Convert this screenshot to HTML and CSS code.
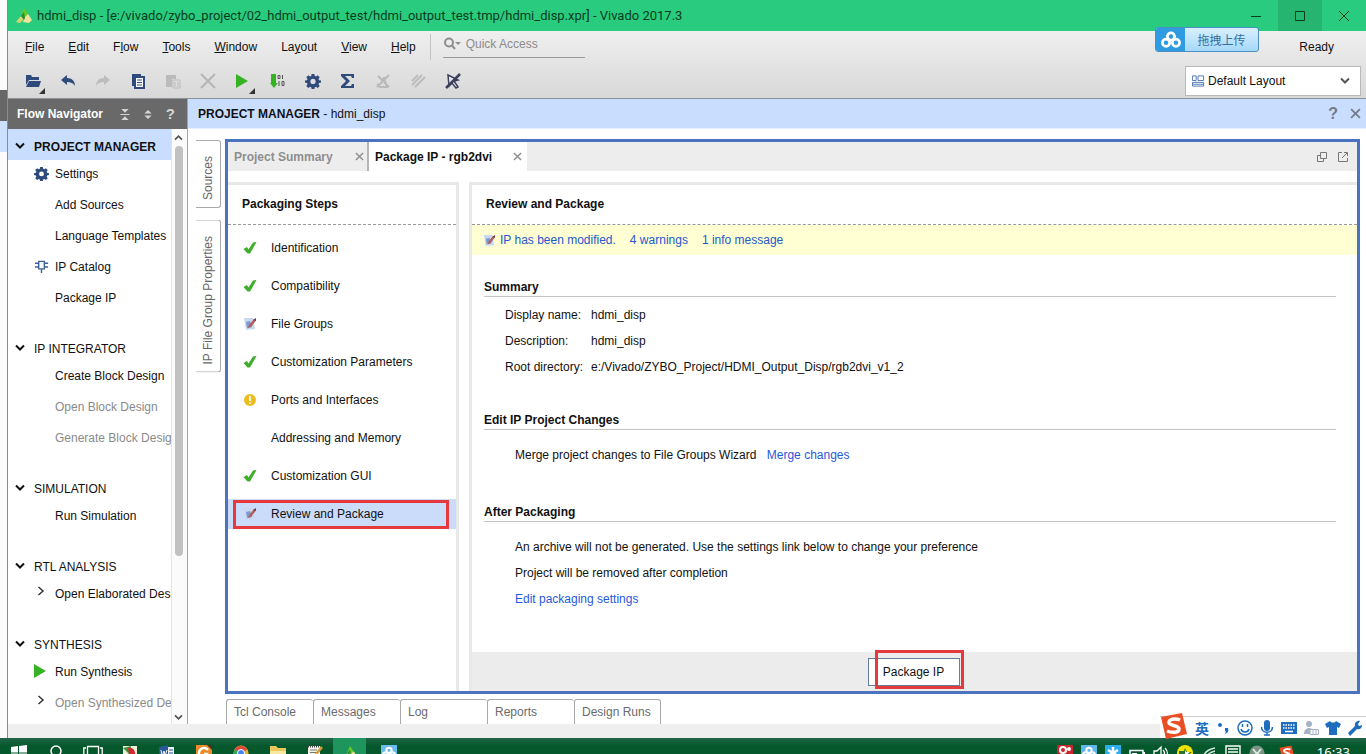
FILE: index.html
```
<!DOCTYPE html>
<html lang="en">
<head>
<meta charset="utf-8">
<title>hdmi_disp - Vivado 2017.3</title>
<link rel="stylesheet" href="styles.css">
</head>
<body>
<svg class="defs" aria-hidden="true">
  <symbol id="check" viewBox="0 0 14 14"><path d="M.5 8l3.500-2 1.500 2.500L10 1.500l3.500-.5L7 12.500H4.500z" fill="#3fae2a"/></symbol>
  <symbol id="edited" viewBox="0 0 14 14"><path d="M1 1h9l2 11-9 1z" fill="#c9d8f1"/><path d="M3 5l4-1 2 6-5 1z" fill="#7d9bd2"/><path d="M5 11l1-3 5-6 2 1.500L8 10z" fill="#b0605f"/><path d="M10 3l3-2v3z" fill="#6e3c50"/></symbol>
  <symbol id="cog" viewBox="0 0 16 16"><path fill-rule="evenodd" fill="#2f4b7c" d="M6.600 1h2.800l.4 2 1.200.5 1.700-1.200 2 2L13.500 6l.5 1.200 2 .4v2l-2 .5-.5 1.200 1.200 1.700-2 2-1.700-1.200-1.200.5-.4 1.700H6.600l-.4-1.700-1.200-.5-1.700 1.200-2-2L2.500 11.300 2 10.100l-2-.5v-2l2-.4L2.500 6 1.300 4.300l2-2L5 3.500 6.200 3zM8 5.800a2.600 2.600 0 100 5.200 2.600 2.600 0 000-5.200z"/></symbol>
  <symbol id="down" viewBox="0 0 10 8"><path d="M1 1.500l4 4 4-4" fill="none" stroke="currentColor" stroke-width="2"/></symbol>
  <symbol id="right" viewBox="0 0 8 10"><path d="M1.500 1l4.500 4-4.500 4" fill="none" stroke="currentColor" stroke-width="1.500"/></symbol>
  <symbol id="cross" viewBox="0 0 10 10"><path d="M1 1l8 8M9 1L1 9" fill="none" stroke="currentColor" stroke-width="1.600"/></symbol>
  <symbol id="play" viewBox="0 0 12 14"><path d="M0 0l12 7-12 7z" fill="#35b324"/></symbol>
  <symbol id="vivado" viewBox="0 0 18 18"><path d="M6 8L9 1l4 6-3 4z" fill="#62cc2b"/><path d="M1 15l5-6 3 3-4 4z" fill="#d8d56f"/><path d="M8 15l2-5 3-3 4 6-3 3z" fill="#efe49a"/><path d="M6 9l3-4 1 6-1 2z" fill="#318b35"/></symbol>
  <symbol id="cloud" viewBox="0 0 24 20"><g fill="none" stroke="currentColor" stroke-width="3"><circle cx="12" cy="6" r="4"/><circle cx="6.500" cy="13" r="4"/><circle cx="17.500" cy="13" r="4"/></g></symbol>
  <symbol id="sogou" viewBox="0 0 28 28"><path d="M1 5l21-4 5 21-21 5z" fill="#e94f25"/><path d="M20 8c-4-2-12-1-11 3 1 3 10 2 10 6 0 4-7 4-12 2" fill="none" stroke="#fff" stroke-width="3.500"/></symbol>
</svg>
<div class="desktop">
  <div class="stage">
    <div class="behind"><i class="behind-dark"></i><i class="behind-blue"></i></div>
    <div class="window">
      <header class="titlebar">
        <svg class="logo"><use href="#vivado"/></svg>
        <h1>hdmi_disp - [e:/vivado/zybo_project/02_hdmi_output_test/hdmi_output_test.tmp/hdmi_disp.xpr] - Vivado 2017.3</h1>
        <button class="caption" aria-label="Minimize"><svg viewBox="0 0 12 12"><path d="M1 6.500h10" stroke="#073d20"/></svg></button>
        <button class="caption lit" aria-label="Restore"><svg viewBox="0 0 12 12"><path d="M1.500 1.500h9v9h-9z" fill="none" stroke="#073d20"/></svg></button>
        <button class="caption" aria-label="Close"><svg viewBox="0 0 12 12"><path d="M1 1l10 10M11 1L1 11" stroke="#073d20"/></svg></button>
      </header>
      <div class="chrome">
        <div class="menurow">
          <nav class="menu">
            <button><u>F</u>ile</button><button><u>E</u>dit</button><button>F<u>l</u>ow</button><button><u>T</u>ools</button><button><u>W</u>indow</button><button>La<u>y</u>out</button><button><u>V</u>iew</button><button><u>H</u>elp</button>
          </nav>
          <label class="quick"><svg viewBox="0 0 18 14"><circle cx="6" cy="5.500" r="4" fill="none" stroke="#8e8e8e" stroke-width="2"/><path d="M9 8.500l3 3.500" stroke="#8e8e8e" stroke-width="2"/><path d="M12 5h6l-3 3z" fill="#8e8e8e"/></svg><input type="text" placeholder="Quick Access" aria-label="Quick Access"></label>
          <span class="ready">Ready</span>
        </div>
        <div class="toolrow">
          <div class="tools">
            <button class="has-more" aria-label="Open"><svg viewBox="0 0 16 16"><path d="M1 2h5l1 2h7v3H4l-3 5z" fill="#2f4b7c"/><path d="M4 8h12l-2 6H1z" fill="#2f4b7c"/></svg></button>
            <button aria-label="Undo"><svg viewBox="0 0 16 16"><path d="M1 7l6-5v3c5 0 8 3 8 8-2-3-4-4-8-4v3z" fill="#2f4b7c"/></svg></button>
            <button aria-label="Redo"><svg viewBox="0 0 16 16"><path d="M15 7L9 2v3c-5 0-8 3-8 8 2-3 4-4 8-4v3z" fill="#bdbdbd"/></svg></button>
            <button aria-label="Copy"><svg viewBox="0 0 16 16"><path d="M2 1h9v2H4v10H2z" fill="#2f4b7c"/><path d="M5 4h9v11H5z" fill="#fff" stroke="#2f4b7c" stroke-width="2"/><path d="M7 7h5M7 9.500h5M7 12h5" stroke="#2f4b7c"/></svg></button>
            <button aria-label="Paste"><svg viewBox="0 0 16 16"><path d="M1 2h10v4H7v8H1z" fill="#bbb"/><path d="M8 7h7v8H8z" fill="#ddd" stroke="#bbb"/><path d="M10 9v5M13 9v5" stroke="#bbb"/></svg></button>
            <button aria-label="Delete"><svg viewBox="0 0 16 16"><path d="M1 1l14 14M15 1L1 15" stroke="#b5b5b5" stroke-width="2"/></svg></button>
            <button class="has-more" aria-label="Run"><svg viewBox="0 0 16 16"><path d="M1 1l12 7-12 7z" fill="#35b324"/></svg></button>
            <button aria-label="Generate bitstream"><svg viewBox="0 0 16 16"><path d="M1 1h5v9h2l-4 5-4-5h1z" fill="#35b324"/><path d="M8 2.500h2v3H8zM12.500 2v4M9 8v5M12 8.500h2v4h-2z" fill="none" stroke="#555"/></svg></button>
            <button aria-label="Settings"><svg><use href="#cog"/></svg></button>
            <button aria-label="Report"><svg viewBox="0 0 16 16"><path d="M1 1h13v4h-2l-1-2H5l5 5-5 5h6l1-2h2v4H1v-2l5-5-5-5z" fill="#2f4b7c"/></svg></button>
            <button aria-label="Cut route"><svg viewBox="0 0 16 16"><path d="M2 14L14 2M3 3l4 4 2-2 3 9H5l-3-3M9 9l5 5" fill="none" stroke="#b9b9b9" stroke-width="2"/></svg></button>
            <button aria-label="Highlight"><svg viewBox="0 0 16 16"><path d="M2 12L12 2M5 14L15 4M2 8l6-6" stroke="#bcbcbc" stroke-width="2"/></svg></button>
            <button aria-label="Unselect"><svg viewBox="0 0 16 16"><path d="M3 2l10 5-4 1 4 6-2 1-4-5-3 3z" fill="#eee" stroke="#3d405c" stroke-width="1.500"/><path d="M1 15L15 1" stroke="#3d405c" stroke-width="2.500"/></svg></button>
          </div>
          <div class="picker">
            <svg viewBox="0 0 14 12"><path d="M.5.5h4v5h-4zM6.500.5h6v5h-6zM.5 7.500h12v4H.5zM1 9.500h12" fill="none" stroke="#4d75b0"/></svg>
            <select aria-label="Layout"><option>Default Layout</option></select>
            <svg class="arrow"><use href="#down"/></svg>
          </div>
        </div>
      </div>
      <div class="work">
        <aside class="navigator">
          <div class="nav-title"><h2>Flow Navigator</h2>
            <svg viewBox="0 0 10 12"><path d="M1 0h8L5 4zM0 5.500h10v1H0zM1 12h8L5 8z" fill="#d4d4d4"/></svg>
            <svg viewBox="0 0 10 12"><path d="M1 5h8L5 1zM1 7h8l-4 4z" fill="#d4d4d4"/></svg>
            <b>?</b></div>
          <div class="nav-body">
            <div class="tree">
              <section><h3 class="current"><svg><use href="#down"/></svg>PROJECT MANAGER</h3>
                <a href="#settings"><svg class="big"><use href="#cog"/></svg>Settings</a>
                <a href="#add">Add Sources</a><a href="#lang">Language Templates</a>
                <a href="#catalog"><svg class="big" viewBox="0 0 16 16"><path d="M5 2.500h6v8H5zM1 4.500h4M1 8.500h4M11 4.500h4M11 8.500h4M8 10v5" fill="none" stroke="#3f6396" stroke-width="1.500"/></svg>IP Catalog</a>
                <a href="#package">Package IP</a></section>
              <section><h3><svg><use href="#down"/></svg>IP INTEGRATOR</h3>
                <a href="#create">Create Block Design</a><a class="off" href="#open">Open Block Design</a><a class="off" href="#generate">Generate Block Design</a></section>
              <section><h3><svg><use href="#down"/></svg>SIMULATION</h3><a href="#sim">Run Simulation</a></section>
              <section><h3><svg><use href="#down"/></svg>RTL ANALYSIS</h3><a href="#elab"><svg class="small"><use href="#right"/></svg>Open Elaborated Design</a></section>
              <section><h3><svg><use href="#down"/></svg>SYNTHESIS</h3><a href="#syn"><svg class="run"><use href="#play"/></svg>Run Synthesis</a><a class="off" href="#opensyn"><svg class="small"><use href="#right"/></svg>Open Synthesized Design</a></section>
            </div>
            <div class="scroll"><svg class="up"><use href="#down"/></svg><i></i><svg class="dn"><use href="#down"/></svg></div>
          </div>
        </aside>
        <main>
          <div class="main-title"><h2><b>PROJECT MANAGER</b> - hdmi_disp</h2><span>?</span><svg><use href="#cross"/></svg></div>
          <div class="main-body">
            <div class="sidetabs"><button>Sources</button><button>IP File Group Properties</button></div>
            <div class="center">
              <div class="editor">
                <div class="tabs">
                  <div class="tab"><span>Project Summary</span><svg><use href="#cross"/></svg></div>
                  <div class="tab active"><span>Package IP - rgb2dvi</span><svg><use href="#cross"/></svg></div>
                  <div class="tab-tools">
                    <svg viewBox="0 0 12 12"><path d="M4.500 1.500h6v6h-6zM4 4.500H1.500v6h6V8" fill="none" stroke="#777"/></svg>
                    <svg viewBox="0 0 12 12"><path d="M5 1.500H1.500v9h9V7M5 7l5-5M7 1.500h3.500V5" fill="none" stroke="#777"/></svg>
                  </div>
                </div>
                <div class="panes">
                  <section class="steps"><h2>Packaging Steps</h2>
                    <ul>
                      <li><svg><use href="#check"/></svg>Identification</li>
                      <li><svg><use href="#check"/></svg>Compatibility</li>
                      <li><svg><use href="#edited"/></svg>File Groups</li>
                      <li><svg><use href="#check"/></svg>Customization Parameters</li>
                      <li><svg viewBox="0 0 14 14"><circle cx="7" cy="7" r="6" fill="#efbd1b"/><path d="M7 3v5M7 9.500v1.500" stroke="#fff" stroke-width="1.800"/></svg>Ports and Interfaces</li>
                      <li><svg></svg>Addressing and Memory</li>
                      <li><svg><use href="#check"/></svg>Customization GUI</li>
                      <li class="selected"><svg><use href="#edited"/></svg>Review and Package<i class="mark"></i></li>
                    </ul>
                  </section>
                  <section class="review"><h2>Review and Package</h2>
                    <div class="banner"><svg><use href="#edited"/></svg><a href="#modified">IP has been modified.</a><a href="#warnings">4 warnings</a><a href="#info">1 info message</a></div>
                    <div class="details">
                      <h3>Summary</h3>
                      <dl><dt>Display name:</dt><dd>hdmi_disp</dd><dt>Description:</dt><dd>hdmi_disp</dd><dt>Root directory:</dt><dd>e:/Vivado/ZYBO_Project/HDMI_Output_Disp/rgb2dvi_v1_2</dd></dl>
                      <h3>Edit IP Project Changes</h3>
                      <p class="merge">Merge project changes to File Groups Wizard <a href="#merge">Merge changes</a></p>
                      <h3>After Packaging</h3>
                      <div class="after"><p>An archive will not be generated. Use the settings link below to change your preference</p><p>Project will be removed after completion</p><p><a href="#edit">Edit packaging settings</a></p></div>
                    </div>
                    <footer><div class="action"><button>Package IP</button><i class="mark"></i></div></footer>
                  </section>
                </div>
              </div>
              <div class="consoles"><button>Tcl Console</button><button>Messages</button><button>Log</button><button>Reports</button><button>Design Runs</button></div>
            </div>
          </div>
        </main>
      </div>
      <div class="status"></div>
    </div>
  </div>
  <div class="taskbar">
    <div class="apps">
      <span><svg viewBox="0 0 16 16"><path d="M0 2l7-1v6.500H0zM8 1l8-1v7.500H8zM0 8.500h7V15l-7-1zM8 8.500h8V16l-8-1z" fill="#fff"/></svg></span>
      <span><svg viewBox="0 0 16 16"><circle cx="8" cy="6" r="5" fill="none" stroke="#fff" stroke-width="1.500"/></svg></span>
      <span class="wide"><svg viewBox="0 0 20 16"><path d="M4.500 1.500h11v13h-11zM3 3H.8v10H3M17 3h2.200v10H17" fill="none" stroke="#fff" stroke-width="1.300"/></svg></span>
      <span><svg viewBox="0 0 16 16"><path d="M1 1h14v14H1z" fill="#f3f0dd"/><path d="M1 3l8-2-1 9z" fill="#35963b"/><path d="M6 3c5-1 8 3 7 8l-6-2z" fill="#d5272e"/></svg></span>
      <span><svg viewBox="0 0 16 16"><path d="M0 2l9-2v16l-9-2z" fill="#2b579a"/><path d="M9 2h6v12H9z" fill="#eef3fb"/><path d="M2 5l1 6 2-5 1 5 2-6" fill="none" stroke="#fff"/><path d="M10 5h4M10 8h4M10 11h4" stroke="#2b579a"/></svg></span>
      <span><svg viewBox="0 0 16 16"><path d="M0 0h16v16H0z" fill="#ee8a28"/><path d="M12 5a5 5 0 10-1 7V9H8" fill="none" stroke="#fff" stroke-width="2.500"/><path d="M11 0h5v5z" fill="#4b3218"/></svg></span>
      <span><svg viewBox="0 0 16 16"><circle cx="8" cy="8" r="7.500" fill="#e2b52d"/><path d="M1.500 4.500A7.500 7.500 0 0114.500 4.500L8 8z" fill="#dd4b3e"/><path d="M1.500 4.500A7.500 7.500 0 008 15.500L8 8z" fill="#3aa757"/><circle cx="8" cy="8" r="3.500" fill="#4484ef" stroke="#fff"/></svg></span>
      <span><svg viewBox="0 0 16 16"><path d="M0 1h6l2 2h8v12H0z" fill="#edc65b"/><path d="M0 6h16v9H0z" fill="#f9e8a2"/></svg></span>
      <span><svg viewBox="0 0 16 16"><path d="M1 1h12v15H1z" fill="#f4f4e6"/><path d="M1 1.500h12" stroke="#444" stroke-width="2" stroke-dasharray="1 1"/><path d="M3 5h7M3 7.500h6" stroke="#777"/><path d="M7 10l7-9 2 2-7 8z" fill="#d49b36"/></svg></span>
      <span class="running"><svg><use href="#vivado"/></svg></span>
      <span><svg viewBox="0 0 24 24"><path d="M0 0h24v24H0z" fill="#69bcec"/><g fill="none" stroke="#fff" stroke-width="3"><circle cx="12" cy="8" r="4"/><circle cx="7" cy="15" r="4"/><circle cx="17" cy="15" r="4"/></g></svg></span>
    </div>
    <div class="tray">
      <svg viewBox="0 0 16 16"><path d="M0 0h16v16H0z" fill="#ca2630"/><circle cx="6" cy="5" r="3" fill="none" stroke="#fff" stroke-width="2"/><circle cx="12" cy="4" r="2" fill="#fff"/><path d="M2 14c1-5 9-5 10 0" stroke="#fff" fill="none" stroke-width="2"/></svg>
      <svg viewBox="0 0 24 24"><path d="M0 0h24v24H0z" fill="#62b7ea"/><g fill="none" stroke="#fff" stroke-width="3"><circle cx="12" cy="8" r="4"/><circle cx="7" cy="15" r="4"/><circle cx="17" cy="15" r="4"/></g></svg>
      <svg viewBox="0 0 16 16"><path d="M0 0h16v16H0z" fill="#2eaeea"/><path d="M8 2v12M3 5l10 6M13 5L3 11" stroke="#fff" stroke-width="2.500"/></svg>
      <svg viewBox="0 0 16 16"><path d="M1 5.500h13v7H1z" fill="none" stroke="#fff" stroke-width="1.500"/><path d="M3 8h5v3H3zM14 7h2v4h-2z" fill="#fff"/></svg>
      <svg viewBox="0 0 16 16"><path d="M1 6h3l4-4v12l-4-4H1zM10 5c2 2 2 4 0 6M12 3c3 3 3 7 0 10" fill="none" stroke="#fff" stroke-width="1.300"/></svg>
      <svg viewBox="0 0 16 16"><circle cx="8" cy="8" r="8" fill="#f1e400"/><path d="M8 3l2 4h5l-4 3 1 5H5V9H2V6h5z" fill="#2c7132"/><path d="M8 5l1 2h4l-5 4z" fill="#fff"/></svg>
      <svg viewBox="0 0 16 16"><path d="M2 12C4 6 8 4 14 3M5 14c1-5 4-7 9-8M9 14c1-3 2-5 5-5" fill="none" stroke="#d7e7de" stroke-width="1.500"/></svg>
      <svg viewBox="0 0 16 16"><path d="M1 1h14v11H9l-3 3v-3H1zM3 4h10M3 7h10" fill="none" stroke="#fff" stroke-width="1.400"/></svg>
      <svg viewBox="0 0 16 16"><circle cx="8" cy="8" r="7.500" fill="#789382"/><path d="M4 4l4 5 4-5M8 9v5" fill="none" stroke="#d8e6dc" stroke-width="2"/></svg>
      <svg class="apart" viewBox="0 0 28 28"><use href="#sogou"/></svg>
      <time>16:33</time>
    </div>
  </div>
  <button class="upload"><span class="upload-icon"><svg><use href="#cloud"/></svg></span><span class="upload-text">拖拽上传</span></button>
  <div class="ime">
    <svg class="s"><use href="#sogou"/></svg>
    <b>英</b>
    <svg viewBox="0 0 16 16"><circle cx="5" cy="5" r="2" fill="#1e6dbe"/><path d="M10 8h3c1 3 0 5-3 6 1-2 1-3 0-3z" fill="#1e6dbe"/></svg>
    <svg viewBox="0 0 16 16"><circle cx="8" cy="8" r="7" fill="none" stroke="#1e6dbe" stroke-width="1.500"/><path d="M4 9c1 4 7 4 8 0M5.500 4v3M10.500 4v3" fill="none" stroke="#1e6dbe" stroke-width="1.500"/></svg>
    <svg viewBox="0 0 16 16"><path d="M5 3a3 3 0 016 0v5a3 3 0 01-6 0z" fill="#1e6dbe"/><path d="M2.500 7c0 7 11 7 11 0M8 12v3M5 15h6" fill="none" stroke="#1e6dbe" stroke-width="1.500"/></svg>
    <svg viewBox="0 0 16 16"><path d="M0 2h16v12H0z" fill="#1e6dbe"/><path d="M2 5h12M2 8h12" stroke="#fff" stroke-width="1.500" stroke-dasharray="1.500 1"/><path d="M4 11.500h8" stroke="#fff" stroke-width="1.500"/></svg>
    <svg viewBox="0 0 16 16"><circle cx="6" cy="4" r="3" fill="#a6b3c5"/><path d="M1 14c0-8 10-8 10 0z" fill="#a6b3c5"/><path d="M7 9.500h8.500v5H7zM10 9v5M13 9v5" fill="#fff" stroke="#a6b3c5"/></svg>
    <svg viewBox="0 0 16 16"><path d="M5 1c1 2 5 2 6 0l5 3-2 4-2-1v8H4V7L2 8 0 4z" fill="#1e6dbe"/></svg>
    <svg viewBox="0 0 16 16"><path d="M1 13l7-7c-1-3 2-6 5-5l-2 3 1 2 3-1c0 4-3 5-5 4l-7 7z" fill="#1e6dbe"/></svg>
  </div>
</div>
</body>
</html>
```
FILE: styles.css
```
* { box-sizing: border-box; }
body { margin: 0; font: 12px/16px "Liberation Sans", Arial, sans-serif; color: #111; }
h1, h2, h3, p, ul, dl, dd { margin: 0; padding: 0; font-size: 12px; }
button, input, select { font: inherit; color: inherit; background: none; border: 0; padding: 0; margin: 0; }
a { color: inherit; text-decoration: none; }
svg { display: block; flex: none; }
.defs { position: absolute; width: 0; height: 0; }

.desktop { position: relative; height: 100vh; display: flex; flex-direction: column; overflow: hidden; background: #fff; }
.stage { flex: 1; min-height: 0; display: flex; }
.behind { width: 7px; flex: none; display: flex; flex-direction: column; padding-top: 90px; background: #fbfbfb; }
.behind-dark { height: 31px; background: #666; }
.behind-blue { height: 31px; background: #cbdfff; }
.window { flex: 1; min-width: 0; display: flex; flex-direction: column; border-left: 1px solid #6f9a8a; }

.titlebar { height: 31px; flex: none; display: flex; align-items: center; background: #29cc7e; padding-left: 7px; }
.logo { width: 18px; height: 18px; margin-right: 4px; }
.titlebar h1 { flex: 1; font: 13px/20px Roboto, sans-serif; color: #063d20; white-space: nowrap; }
.caption { width: 44px; height: 31px; display: grid; place-items: center; }
.caption svg { width: 12px; height: 12px; }
.lit { background: #26b571; }

.chrome { height: 68px; flex: none; background: linear-gradient(#efefef, #d8d8d8); border-bottom: 1px solid #8f9299; display: flex; flex-direction: column; }
.menurow { height: 32px; display: flex; align-items: center; padding: 0 32px 0 17px; }
.menu { display: flex; gap: 24px; padding-right: 14px; margin-right: 12px; border-right: 1px solid #c3c3c3; line-height: 26px; }
.quick { width: 142px; display: flex; align-items: center; gap: 5px; border-bottom: 1px solid #999; padding-bottom: 5px; }
.quick svg { width: 18px; height: 14px; }
.quick input { width: 110px; outline: 0; }
.quick input::placeholder { color: #8b8b8b; opacity: 1; }
.ready { margin-left: auto; }
.toolrow { flex: 1; display: flex; align-items: center; justify-content: space-between; padding: 0 5px 0 16px; }
.tools { display: flex; gap: 17px; }
.tools button { width: 18px; height: 28px; display: grid; place-items: center; position: relative; }
.tools svg { width: 16px; height: 16px; }
.has-more::after { content: ""; position: absolute; right: -3px; bottom: 1px; border: 3px solid transparent; border-right-color: #333; border-bottom-color: #333; }
.picker { position: relative; width: 176px; height: 30px; display: flex; align-items: center; gap: 3px; padding-left: 6px; background: #fff; border: 1px solid #b9b9b9; }
.picker svg { width: 13px; height: 12px; }
.picker select { flex: 1; height: 28px; appearance: none; outline: 0; }
.picker .arrow { width: 10px; height: 8px; margin-right: 10px; color: #555; pointer-events: none; }

.work { flex: 1; min-height: 0; display: flex; }
.navigator { width: 180px; flex: none; display: flex; flex-direction: column; border-right: 1px solid #a4a4a4; }
.nav-title { height: 30px; flex: none; display: flex; align-items: center; gap: 13px; padding: 0 12px 0 9px; background: #696969; color: #fff; }
.nav-title h2 { flex: 1; }
.nav-title svg { width: 10px; height: 11px; }
.nav-title b { color: #d4d4d4; font-size: 15px; }
.nav-body { flex: 1; min-height: 0; display: flex; }
.tree { flex: 1; min-width: 0; overflow: hidden; white-space: nowrap; }
.tree section { margin-bottom: 17px; }
.tree h3 { position: relative; height: 31px; margin-bottom: -1px; padding: 4px 0 0 26px; line-height: 28px; font-weight: 400; }
.tree h3 svg { position: absolute; left: 7px; top: 13px; width: 10px; height: 8px; }
.tree .current { font-weight: 700; background: #c9deff; }
.tree a { position: relative; display: block; padding-left: 47px; line-height: 31px; }
.tree a svg { position: absolute; left: 26px; top: 7px; }
.big { width: 15px; height: 15px; }
.small { width: 8px; height: 10px; margin-left: 3px; color: #333; }
.run { width: 12px; height: 14px; }
.off { color: #8a8a8a; }
.scroll { width: 16px; flex: none; display: flex; flex-direction: column; align-items: center; padding: 5px 2px 3px 0; border-left: 1px solid #e4e4e4; background: #fbfbfb; color: #555; }
.scroll i { width: 8px; flex: 0 1 410px; border-radius: 4px; background: #c1c1c1; margin-top: 5px; }
.scroll svg { width: 9px; height: 7px; }
.up { transform: scaleY(-1); }
.dn { margin-top: auto; }

main { flex: 1; min-width: 0; display: flex; flex-direction: column; }
.main-title { height: 30px; flex: none; display: flex; align-items: center; gap: 12px; padding: 0 5px 0 10px; background: #c9deff; color: #737b88; border-bottom: 1px solid #e6effd; }
.main-title h2 { flex: 1; font-weight: 400; color: #111; }
.main-title span { font-weight: 700; font-size: 16px; }
.main-title svg { width: 11px; height: 11px; }
.main-body { flex: 1; min-height: 0; display: flex; padding: 10px 6px 0 8px; gap: 4px; }
.sidetabs { width: 25px; display: flex; flex-direction: column; align-items: flex-start; gap: 12px; padding-top: 1px; }
.sidetabs button { width: 25px; writing-mode: vertical-rl; transform: rotate(180deg); padding: 7px 0 15px; line-height: 24px; color: #666; border: 1px solid #aaa; border-right: 0; border-radius: 3px 0 0 3px; }
.center { flex: 1; min-width: 0; display: flex; flex-direction: column; }
.editor { flex: 1; min-height: 0; display: flex; flex-direction: column; border: 3px solid #4b73bf; }
.tabs { height: 29px; flex: none; display: flex; background: #ededed; }
.tab { width: 141px; display: flex; justify-content: space-between; align-items: center; padding: 0 3px 0 6px; font-weight: 700; color: #8e8e8e; border-right: 2px solid #b5b5b5; }
.tab svg { width: 9px; height: 9px; color: #8e8e8e; }
.active { width: 158px; padding-right: 5px; background: #fff; color: #111; border: 0; }
.tab-tools { margin-left: auto; display: flex; align-items: center; gap: 9px; padding-right: 8px; }
.tab-tools svg { width: 12px; height: 12px; }
.panes { flex: 1; min-height: 0; display: flex; gap: 10px; padding-top: 11px; }
.steps { width: 231px; flex: none; border-top: 3px solid #e8e8e8; border-right: 3px solid #e8e8e8; }
.review { flex: 1; display: flex; flex-direction: column; border-top: 3px solid #e8e8e8; border-left: 3px solid #e8e8e8; }
.panes h2 { line-height: 39px; padding-left: 14px; border-bottom: 1px dashed #999; }
.steps ul { list-style: none; padding-top: 8px; display: flex; flex-direction: column; gap: 8px; }
.steps li { position: relative; height: 30px; display: flex; align-items: center; gap: 14px; padding-left: 15px; }
.steps li svg { width: 14px; height: 14px; }
.selected { background: #cbdcfa; }
.mark { position: absolute; border: 3px solid #e5393e; pointer-events: none; }
.selected .mark { inset: 1px 7px 0 5px; }
.banner { height: 30px; flex: none; display: flex; align-items: center; gap: 14px; padding-left: 11px; background: #ffffd3; color: #2358d0; }
.banner svg { width: 13px; height: 13px; margin-right: -10px; }
.details { flex: 1; padding: 24px 21px 0 12px; }
.details h3 { border-bottom: 1px solid #c4c4c4; line-height: 17px; }
.details dl { display: grid; grid-template-columns: 86px 1fr; row-gap: 10px; padding: 10px 0 37px 21px; }
.details a { color: #1f59dc; }
.merge { padding: 17px 0 41px 31px; }
.merge a { margin-left: 7px; }
.after { display: flex; flex-direction: column; gap: 10px; padding: 17px 0 0 31px; }
.review footer { height: 39px; flex: none; display: flex; justify-content: center; align-items: center; padding-right: 2px; background: #ececec; }
.action { position: relative; }
.action button { display: block; width: 92px; height: 28px; background: #fff; border: 1px solid #657f9a; }
.action .mark { inset: -8px -4px -3px 7px; }
.consoles { height: 30px; flex: none; display: flex; padding: 5px 0 0 1px; color: #6b6b6b; }
.consoles button { width: 87px; text-align: left; padding-left: 7px; border: 1px solid #aaa; border-width: 1px 0 0 1px; border-radius: 3px 3px 0 0; }
.consoles button:last-child { border-right-width: 1px; }
.status { height: 14px; flex: none; background: #efefef; }

.taskbar { height: 16px; flex: none; display: flex; justify-content: space-between; overflow: hidden; background: linear-gradient(#22644a, #04582b 8px); color: #fff; }
.apps { display: flex; }
.apps span { width: 37px; height: 40px; display: flex; justify-content: center; padding-top: 7px; }
.apps svg { width: 16px; height: 16px; }
.apps .wide svg { width: 20px; }
.apps .running { width: 33px; margin-right: 4px; background: #1d955d; }
.tray { display: flex; align-items: flex-start; gap: 8px; padding: 7px 16px 0 0; }
.tray svg { width: 16px; height: 16px; }
.tray .apart { margin: 0 14px 0 6px; }
.tray time { font: 13px/14px "Noto Sans", sans-serif; }

.upload { position: absolute; right: 107px; top: 27px; width: 104px; height: 25px; display: flex; border: 1px solid #4b90c4; border-radius: 3px; overflow: hidden; background: linear-gradient(#d9f0fe, #a5d8fa); color: #35709c; font-family: "Noto Sans CJK SC", sans-serif; }
.upload-icon { width: 29px; height: 23px; display: grid; place-items: center; background: #2f9be0; color: #fff; }
.upload-icon svg { width: 22px; height: 18px; }
.upload-text { flex: 1; line-height: 23px; }
.ime { position: absolute; right: 0; bottom: 16px; height: 22px; display: flex; align-items: center; gap: 6px; padding: 0 3px 0 35px; background: #fff; border-top: 1px solid #ccc; color: #1e6dbe; }
.ime svg { width: 16px; height: 16px; }
.ime b { font: 700 14px/20px "Noto Sans CJK SC", sans-serif; }
.ime .s { position: absolute; left: 0; bottom: -2px; width: 28px; height: 28px; }
```
